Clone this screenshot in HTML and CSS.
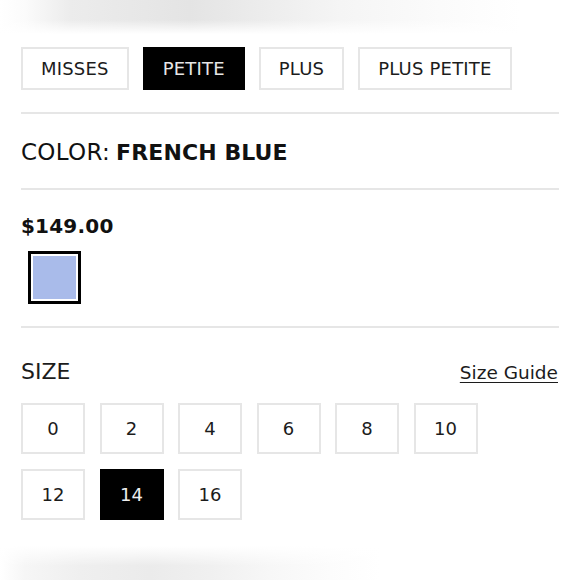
FILE: index.html
```html
<!DOCTYPE html>
<html>
<head>
<meta charset="utf-8">
<link rel="stylesheet" href="styles.css">
</head>
<body>
<div class="blur blur-top"></div>
<main class="panel">
  <div class="tabs">
    <button class="tab">MISSES</button>
    <button class="tab active">PETITE</button>
    <button class="tab">PLUS</button>
    <button class="tab">PLUS PETITE</button>
  </div>
  <div class="section color-row">
    <span class="label">COLOR:</span><span class="value">FRENCH BLUE</span>
  </div>
  <div class="section price-row">
    <div class="price">$149.00</div>
    <div class="swatch"><span class="swatch-fill"></span></div>
  </div>
  <div class="section size-sec">
    <div class="size-head">
      <span class="size-label">SIZE</span>
      <a class="guide">Size Guide</a>
    </div>
    <div class="sizes">
      <button class="size">0</button>
      <button class="size">2</button>
      <button class="size">4</button>
      <button class="size">6</button>
      <button class="size">8</button>
      <button class="size">10</button>
      <button class="size">12</button>
      <button class="size active">14</button>
      <button class="size">16</button>
    </div>
  </div>
</main>
<div class="blur blur-bottom"></div>
</body>
</html>
```
FILE: styles.css
```css
* { box-sizing: border-box; }
html, body { margin: 0; padding: 0; background: #fff; }
body {
  width: 580px;
  height: 580px;
  overflow: hidden;
  font-family: "DejaVu Sans", "Noto Sans", sans-serif;
  color: #1c1c1c;
}
.blur { width: 100%; }
.blur-top {
  height: 34px;
  background:
    linear-gradient(to bottom, rgba(255,255,255,0) 0, rgba(255,255,255,0) 20px, #fff 34px),
    linear-gradient(to right, #fff 0, #fbfbfb 25px, #ececec 70px, #e4e4e4 190px, #ececec 260px, #f5f5f5 340px, #fbfbfb 440px, #fff 520px);
}
.panel { padding: 13px 21px 0 21px; }
.tabs {
  display: flex;
  gap: 14px;
  padding-bottom: 22px;
  border-bottom: 2px solid #e6e6e6;
}
.tab {
  height: 43px;
  padding: 0 18px;
  border: 2px solid #e6e6e6;
  background: #fff;
  font-family: inherit;
  font-size: 18px;
  letter-spacing: 0.2px;
  color: #1c1c1c;
  display: flex;
  align-items: center;
  justify-content: center;
}
.tab.active {
  background: #000;
  border-color: #000;
  color: #e6e6e6;
}
.section { border-bottom: 2px solid #e6e6e6; }
.color-row {
  height: 76px;
  display: flex;
  align-items: center;
  padding-top: 2px;
}
.label { font-size: 23px; font-weight: 400; margin-right: 6px; color: #111; letter-spacing: 0.3px; }
.value { font-size: 22px; font-weight: 700; color: #111; letter-spacing: 0.1px; }
.price-row {
  height: 138px;
  padding-top: 24px;
}
.price {
  font-size: 20px;
  font-weight: 700;
  color: #111;
  line-height: 24px;
  letter-spacing: 0.2px;
}
.swatch {
  margin: 13px 0 0 7px;
  width: 53px;
  height: 53px;
  border: 3px solid #000;
  padding: 2px;
  background: #fff;
}
.swatch-fill {
  display: block;
  width: 100%;
  height: 100%;
  background: #a9bbea;
}
.size-sec { border-bottom: none; padding-top: 31px; }
.size-head {
  display: flex;
  justify-content: space-between;
  align-items: baseline;
  padding-right: 1px;
}
.size-label { font-size: 22px; line-height: 26px; }
.guide {
  font-size: 18.5px;
  text-decoration: underline;
  text-underline-offset: 3px;
  text-decoration-thickness: 1px;
  color: #1c1c1c;
}
.sizes {
  display: flex;
  flex-wrap: wrap;
  gap: 15px 14.5px;
  width: 470px;
  margin-top: 18px;
}
.size {
  width: 64px;
  height: 51px;
  border: 2px solid #e6e6e6;
  background: #fff;
  font-family: inherit;
  font-size: 18px;
  color: #1c1c1c;
  display: flex;
  align-items: center;
  justify-content: center;
  padding: 0;
}
.size.active { background: #000; border-color: #000; color: #eee; }
.blur-bottom {
  position: absolute;
  left: 0;
  top: 546px;
  height: 34px;
  background:
    linear-gradient(to top, rgba(255,255,255,0) 0, rgba(255,255,255,0) 14px, #fff 34px),
    linear-gradient(to right, #fff 0, #f6f6f6 25px, #efefef 80px, #ebebeb 150px, #f0f0f0 210px, #f7f7f7 270px, #fcfcfc 330px, #fff 380px);
}
```
